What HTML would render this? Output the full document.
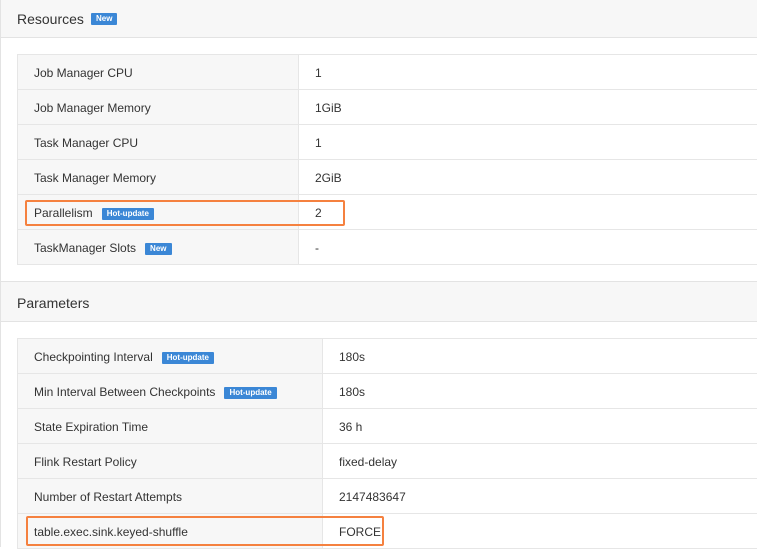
<!DOCTYPE html>
<html><head><style>
body{margin:0;width:757px;height:547px;overflow:hidden;background:#fff;font-family:"Liberation Sans",sans-serif;font-size:12px;color:#333;position:relative}
.lb{position:absolute;left:0;top:0;width:1px;height:547px;background:#e3e3e3}
.hd{position:absolute;left:1px;width:760px;background:#f7f7f7;border-bottom:1px solid #e3e3e3}
.hd span.t{position:absolute;left:16px;font-size:14px;color:#333}
.tag{display:inline-block;background:#3b87d6;color:#fff;font-size:8px;font-weight:bold;padding:1px 5px;line-height:10px;vertical-align:middle;margin-left:9px;border-radius:1px}
table{position:absolute;left:17px;border-collapse:collapse;width:760px}
td{border:1px solid #e6e6e6;height:35px;padding:2px 0 0 16px;box-sizing:border-box;font-size:12px;color:#333}
td.l{background:#f7f7f7}
.box{position:absolute;border:2px solid #f5813f;border-radius:2px}
</style></head><body>
<div class="hd" style="top:0;height:37px"><span class="t" style="top:11px">Resources</span><span class="tag" style="position:absolute;left:90px;top:13px;margin:0">New</span></div>
<table style="top:54px">
<tr><td class="l" style="width:281px">Job Manager CPU</td><td>1</td></tr>
<tr><td class="l">Job Manager Memory</td><td>1GiB</td></tr>
<tr><td class="l">Task Manager CPU</td><td>1</td></tr>
<tr><td class="l">Task Manager Memory</td><td>2GiB</td></tr>
<tr><td class="l">Parallelism<span class="tag">Hot-update</span></td><td>2</td></tr>
<tr><td class="l">TaskManager Slots<span class="tag">New</span></td><td>-</td></tr>
</table>
<div class="hd" style="top:281px;height:39px;border-top:1px solid #e3e3e3"><span class="t" style="top:13px">Parameters</span></div>
<table style="top:338px">
<tr><td class="l" style="width:305px">Checkpointing Interval<span class="tag">Hot-update</span></td><td>180s</td></tr>
<tr><td class="l">Min Interval Between Checkpoints<span class="tag">Hot-update</span></td><td>180s</td></tr>
<tr><td class="l">State Expiration Time</td><td>36 h</td></tr>
<tr><td class="l">Flink Restart Policy</td><td>fixed-delay</td></tr>
<tr><td class="l">Number of Restart Attempts</td><td>2147483647</td></tr>
<tr><td class="l">table.exec.sink.keyed-shuffle</td><td>FORCE</td></tr>
</table>
<div class="lb"></div>
<div class="box" style="left:25px;top:200px;width:316px;height:22px"></div>
<div class="box" style="left:26px;top:516px;width:354px;height:26px"></div>
</body></html>
